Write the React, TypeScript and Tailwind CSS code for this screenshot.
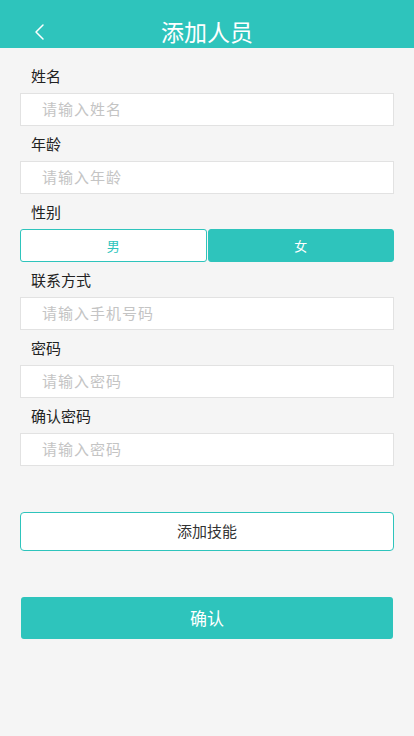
import { useState } from "react";

const FONT = { fontFamily: '"Noto Sans CJK SC", "Noto Sans", sans-serif' };

interface FieldProps {
  label: string;
  placeholder: string;
  first?: boolean;
}

function Field({ label, placeholder, first }: FieldProps) {
  return (
    <div>
      <div
        className={`px-[31px] text-[15px] leading-[22px] text-[#222] ${
          first ? "h-[45px] pt-[17px]" : "h-[35px] pt-[7px]"
        }`}
      >
        {label}
      </div>
      <div className="mx-[20px] h-[33px] bg-white border border-[#e2e2e2] flex items-center px-[21px]">
        <span className="text-[15px] tracking-[1px] text-[#c4c4c4]">{placeholder}</span>
      </div>
    </div>
  );
}

export default function App() {
  const [gender, setGender] = useState<"m" | "f">("f");

  return (
    <div className="w-[414px] h-[736px] bg-[#f5f5f5] overflow-hidden" style={FONT}>
      <div className="h-[48px] bg-[#2ec4bc] relative flex items-center justify-center">
        <svg
          className="absolute left-[33px] top-[23px]"
          width="14"
          height="18"
          viewBox="0 0 14 18"
          fill="none"
        >
          <path d="M10 2 L3 9 L10 16" stroke="white" strokeWidth="1.5" strokeLinecap="round" strokeLinejoin="round" />
        </svg>
        <span className="text-white text-[23px] mt-[14px]">添加人员</span>
      </div>

      <Field label="姓名" placeholder="请输入姓名" first />
      <Field label="年龄" placeholder="请输入年龄" />

      <div className="h-[35px] pt-[7px] px-[31px] text-[15px] leading-[22px] text-[#222]">性别</div>
      <div className="mx-[20px] h-[33px] flex gap-[1px]">
        <button
          onClick={() => setGender("m")}
          className={`flex-1 rounded-[3px] text-[13px] border ${
            gender === "m" ? "bg-[#2ec4bc] text-white border-[#2ec4bc]" : "bg-white text-[#2ec4bc] border-[#2ec4bc]"
          }`}
        >
          男
        </button>
        <button
          onClick={() => setGender("f")}
          className={`flex-1 rounded-[3px] text-[13px] border ${
            gender === "f" ? "bg-[#2ec4bc] text-white border-[#2ec4bc]" : "bg-white text-[#2ec4bc] border-[#2ec4bc]"
          }`}
        >
          女
        </button>
      </div>

      <Field label="联系方式" placeholder="请输入手机号码" />
      <Field label="密码" placeholder="请输入密码" />
      <Field label="确认密码" placeholder="请输入密码" />

      <div className="mt-[46px] mx-[20px] h-[39px] bg-white border border-[#2ec4bc] rounded-[4px] flex items-center justify-center">
        <span className="text-[15px] text-[#333]">添加技能</span>
      </div>

      <div className="mt-[46px] mx-[21px] h-[42px] bg-[#2ec4bc] rounded-[3px] flex items-center justify-center">
        <span className="text-[17px] text-white">确认</span>
      </div>
    </div>
  );
}
